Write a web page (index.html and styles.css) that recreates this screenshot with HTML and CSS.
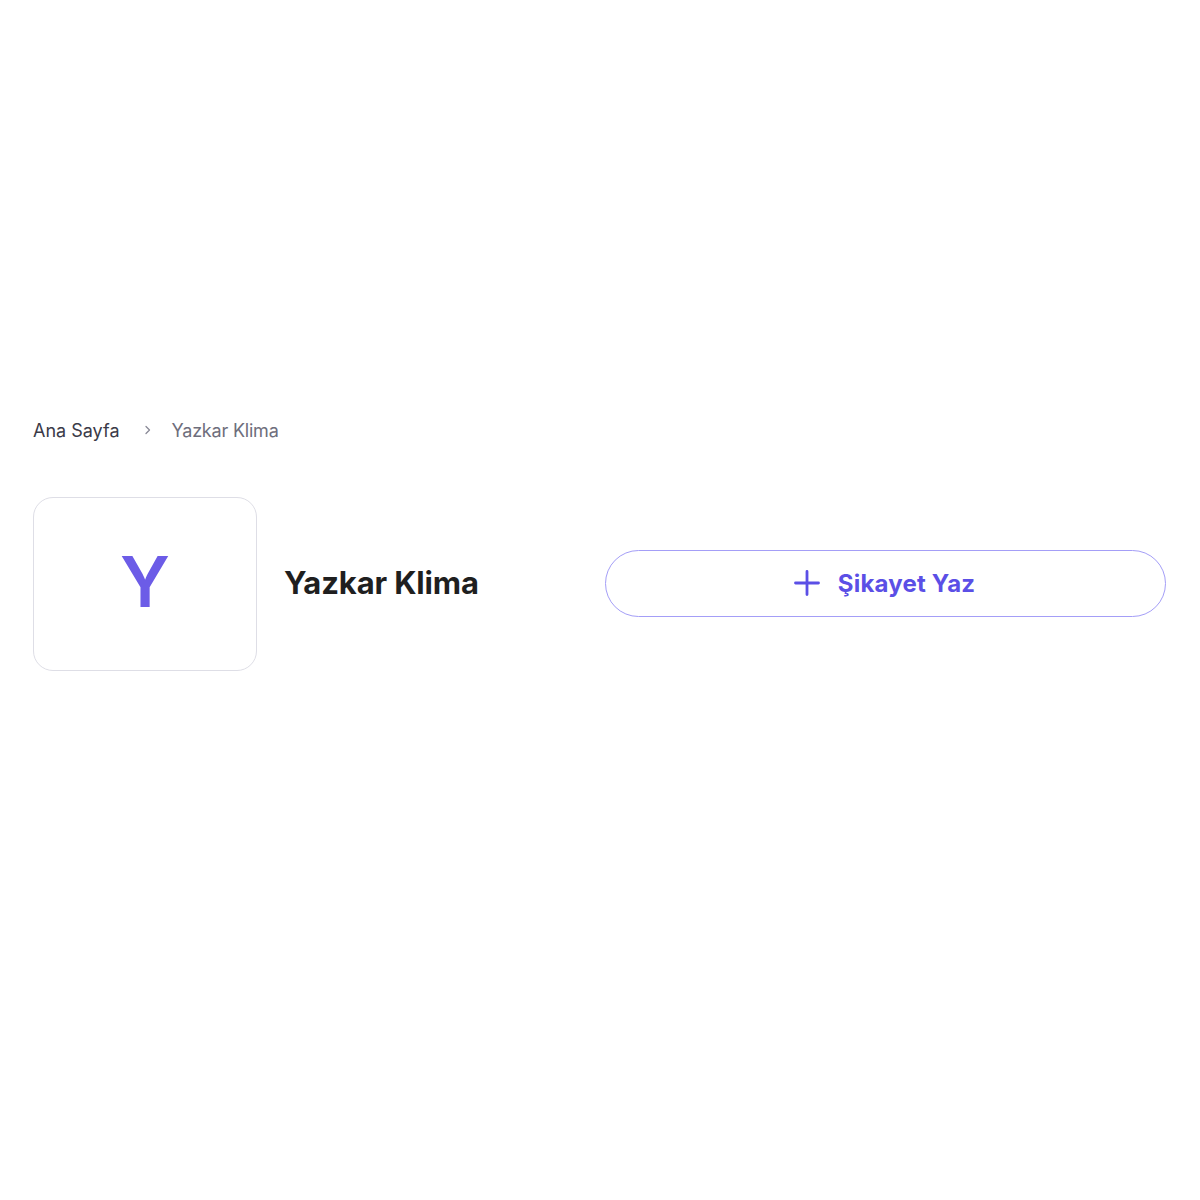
FILE: index.html
```html
<!DOCTYPE html>
<html lang="tr">
<head>
<meta charset="utf-8">
<link rel="stylesheet" href="styles.css">
</head>
<body>
<main class="page">
  <nav class="crumbs">
    <a class="crumb-home">Ana Sayfa</a>
    <svg class="crumb-sep" width="10" height="10" viewBox="0 0 10 10"><path d="M3 1.5 L6.5 5 L3 8.5" fill="none" stroke="#8a8a96" stroke-width="1.3" stroke-linecap="round" stroke-linejoin="round"/></svg>
    <span class="crumb-current">Yazkar Klima</span>
  </nav>
  <section class="brand-row">
    <div class="logo-box"><span class="logo-letter">Y</span></div>
    <h1 class="brand-name">Yazkar Klima</h1>
    <button class="write-btn">
      <svg class="plus" width="26" height="26" viewBox="0 0 26 26"><path d="M13 1.5 V24.5 M1.5 13 H24.5" stroke="#5b4fe6" stroke-width="2.8" stroke-linecap="round"/></svg>
      <span>Şikayet Yaz</span>
    </button>
  </section>
</main>
</body>
</html>
```
FILE: styles.css
```css
html, body { margin: 0; padding: 0; background: #fff; }
body { font-family: "Inter", "Noto Sans", sans-serif; }
.page { padding: 418px 34px 0 33px; }
.crumbs { display: flex; align-items: center; height: 24px; font-size: 18px; }
.crumb-home { color: #3a3a48; }
.crumb-sep { margin: 0 18px 0 24px; }
.crumb-current { color: #6e6e7c; letter-spacing: -0.2px; }
.brand-row { display: flex; align-items: center; margin-top: 55px; }
.logo-box { width: 222px; height: 172px; border: 1px solid #dedee6; border-radius: 20px; display: flex; align-items: center; justify-content: center; flex-shrink: 0; }
.logo-letter { color: #6c5ce7; font-size: 70px; font-weight: 600; line-height: 1; margin-top: -4px; }
.brand-name { flex: 1; margin: -3px 0 0 27px; font-size: 31px; font-weight: 650; color: #1f1f1f; letter-spacing: -0.15px; }
.write-btn { width: 561px; height: 67px; border: 1.5px solid #a49ef7; border-radius: 34px; background: #fff; display: flex; align-items: center; justify-content: center; gap: 18px; font-family: inherit; font-size: 24px; font-weight: 650; color: #5b4fe6; padding: 0; margin-top: -2px; letter-spacing: 0.2px; }
.plus { margin-left: -2px; }
```
